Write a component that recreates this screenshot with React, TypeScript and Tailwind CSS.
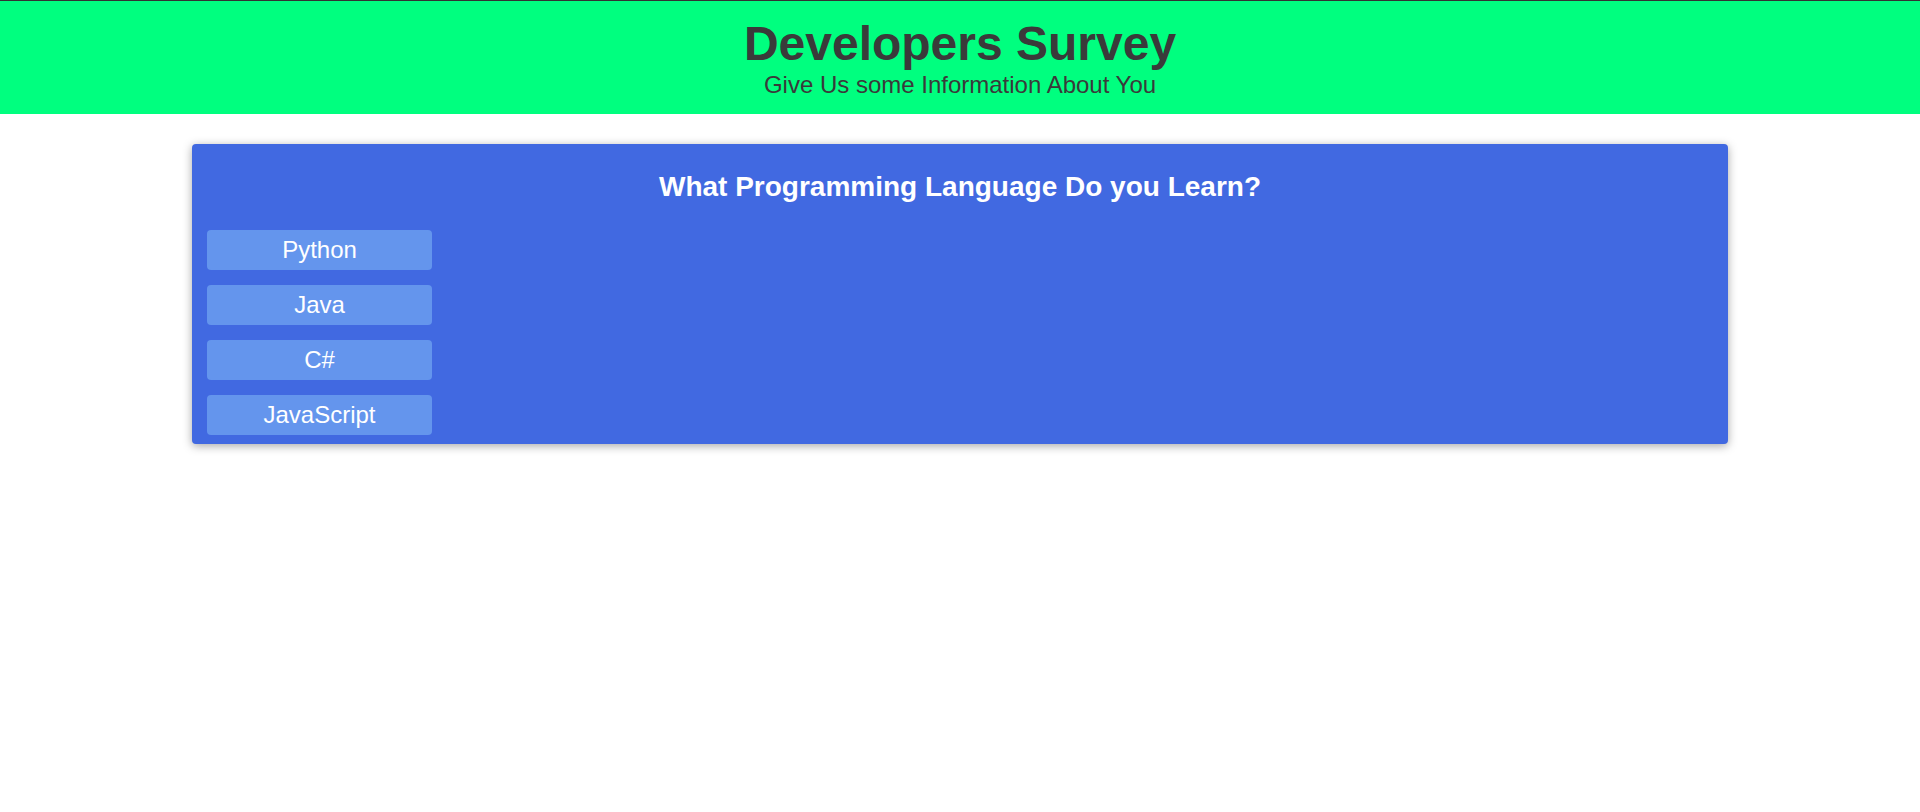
import React from "react";

const languages = ["Python", "Java", "C#", "JavaScript"];

const App: React.FC = () => {
  return (
    <div className="min-h-screen bg-white font-['Liberation_Sans',Arial,sans-serif]">
      {/* Header */}
      <header className="border-t border-[#333] bg-[#00ff7f] py-[15px] text-center text-[#3a3a3a]">
        <h1 className="m-0 text-[48px] font-bold leading-[55px]">
          Developers Survey
        </h1>
        <p className="m-0 text-[24px] leading-[28px]">
          Give Us some Information About You
        </p>
      </header>

      {/* Survey card */}
      <div className="mx-auto mt-[30px] w-[80%] rounded-[4px] bg-[#4169e1] px-[15px] pt-[27px] pb-[9px] shadow-[0_2px_10px_rgba(0,0,0,0.35)]">
        <h2 className="mb-[27px] text-center text-[28px] font-bold leading-[32px] text-white">
          What Programming Language Do you Learn?
        </h2>
        <div className="flex flex-col gap-[15px]">
          {languages.map((lang) => (
            <button
              key={lang}
              className="h-[40px] w-[225px] rounded-[4px] bg-[#6495ed] text-[24px] leading-[40px] text-white"
            >
              {lang}
            </button>
          ))}
        </div>
      </div>
    </div>
  );
};

export default App;
